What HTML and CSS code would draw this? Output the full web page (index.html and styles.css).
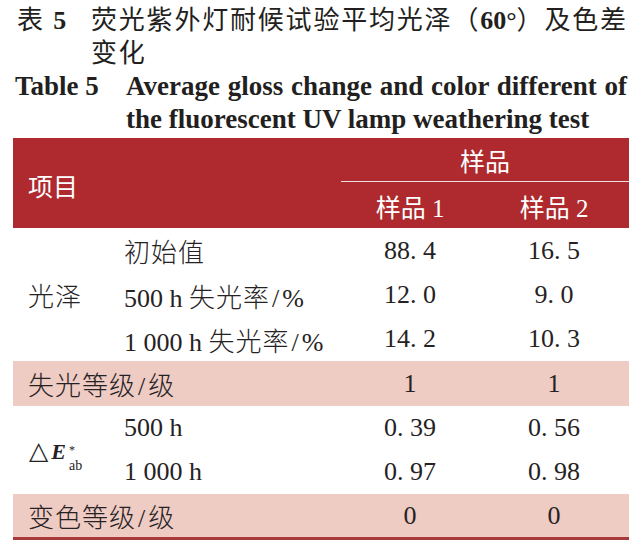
FILE: index.html
```html
<!DOCTYPE html>
<html lang="zh">
<head>
<meta charset="utf-8">
<title>表5</title>
<link rel="stylesheet" href="styles.css">
</head>
<body>
<div class="page">
  <div class="cap cap-cn">
    <div class="lab"><span class="cjk">表</span> <b class="num">5</b></div>
    <div class="txt">荧光紫外灯耐候试验平均光泽（<b class="num">60°</b>）及色差<br>变化</div>
  </div>
  <div class="cap cap-en">
    <div class="lab">Table 5</div>
    <div class="txt"><span class="l1">Average gloss change and color different of</span><br>the fluorescent UV lamp weathering test</div>
  </div>
  <div class="tbl-wrap">
    <table class="tbl">
      <colgroup>
        <col class="c-a"><col class="c-b"><col class="c-c"><col class="c-d">
      </colgroup>
      <thead>
        <tr class="h1">
          <th rowspan="2" colspan="2" class="item">项目</th>
          <th colspan="2" class="grp">样品</th>
        </tr>
        <tr class="h2">
          <th class="ctr">样品 1</th>
          <th class="ctr">样品 2</th>
        </tr>
      </thead>
      <tbody>
        <tr class="r r-first">
          <td rowspan="3" class="first"><span class="cn">光泽</span></td>
          <td><span class="cn">初始值</span></td>
          <td class="ctr">88. 4</td>
          <td class="ctr">16. 5</td>
        </tr>
        <tr class="r">
          <td>500 h <span class="cn">失光率</span><span class="sl">/</span>%</td>
          <td class="ctr">12. 0</td>
          <td class="ctr">9. 0</td>
        </tr>
        <tr class="r">
          <td>1 000 h <span class="cn">失光率</span><span class="sl">/</span>%</td>
          <td class="ctr">14. 2</td>
          <td class="ctr">10. 3</td>
        </tr>
        <tr class="pink p1">
          <td colspan="2" class="first"><span class="cn">失光等级</span><span class="sl">/</span>级</td>
          <td class="ctr">1</td>
          <td class="ctr">1</td>
        </tr>
        <tr class="r">
          <td rowspan="2" class="first de"><span class="tri">△</span><span class="ee">E</span><span class="ss"><span class="sup">*</span><span class="sub">ab</span></span></td>
          <td>500 h</td>
          <td class="ctr">0. 39</td>
          <td class="ctr">0. 56</td>
        </tr>
        <tr class="r">
          <td>1 000 h</td>
          <td class="ctr">0. 97</td>
          <td class="ctr">0. 98</td>
        </tr>
        <tr class="pink p2">
          <td colspan="2" class="first"><span class="cn">变色等级</span><span class="sl">/</span>级</td>
          <td class="ctr">0</td>
          <td class="ctr">0</td>
        </tr>
      </tbody>
    </table>
  </div>
</div>
</body>
</html>
```
FILE: styles.css
```css
html, body {
  margin: 0;
  padding: 0;
  background: #ffffff;
}

.page {
  width: 616px;
  padding: 4px 11px 0 13px;
  color: #231f20;
}

.cap {
  display: grid;
}

.cap-cn {
  grid-template-columns: 74px auto;
  padding-left: 4px;
  font-family: "Liberation Serif", "Noto Sans CJK SC", serif;
  font-size: 26px;
  line-height: 33px;
  letter-spacing: 1.8px;
}

.cap-cn .num {
  font-weight: 700;
  letter-spacing: 0;
}

.cap-en {
  grid-template-columns: 111px auto;
  padding-left: 2px;
  font-family: "Liberation Serif", serif;
  font-weight: 700;
  font-size: 27px;
  line-height: 33px;
  white-space: nowrap;
}

.cap-en .l1 {
  word-spacing: 1px;
}

.tbl-wrap {
  margin-top: 2px;
  border-bottom: 3px solid #a83a3c;
  width: 616px;
}

.tbl {
  width: 616px;
  table-layout: fixed;
  border-collapse: separate;
  border-spacing: 0;
  font-family: "Liberation Serif", "Noto Sans CJK SC", serif;
  font-weight: 300;
  font-size: 26px;
  color: #262223;
}

.c-a { width: 111px; }
.c-b { width: 217px; }
.c-c { width: 138px; }
.c-d { width: 150px; }

.tbl th,
.tbl td {
  padding: 0;
  text-align: left;
  vertical-align: middle;
  white-space: nowrap;
}

.tbl thead th {
  background: #ae2a2e;
  color: #ffffff;
  font-weight: 400;
  font-family: "Liberation Serif", "Noto Sans CJK SC", sans-serif;
  font-size: 25px;
}

.tbl .h1 { height: 44px; }
.tbl .h2 { height: 46px; }

.tbl th.item {
  padding-left: 15px;
  padding-top: 3px;
}

.tbl th.grp {
  text-align: center;
  border-bottom: 1px solid rgba(255, 255, 255, 0.85);
}

.tbl .ctr {
  text-align: center;
}

.tbl th.ctr {
  padding-top: 2px;
}

.tbl .cn {
  letter-spacing: 1px;
}

.tbl .sl {
  margin: 0 3px 0 2px;
}

.tbl .r { height: 44px; }
.tbl .r-first { height: 45px; }
.tbl .p1 { height: 45px; }
.tbl .p2 { height: 43px; }

.tbl .pink td {
  background: #eecbc3;
}

.tbl td.first {
  padding-left: 15px;
}

.tbl td.de {
  padding-left: 16px;
  padding-top: 8px;
}

.tri {
  font-family: "DejaVu Sans", sans-serif;
  font-size: 25px;
  font-weight: 400;
}

.ee {
  font-family: "Liberation Serif", serif;
  font-style: italic;
  font-weight: 700;
  font-size: 22px;
  margin-left: 3px;
}

.ss {
  display: inline-block;
  vertical-align: -11px;
  margin-left: 3px;
  font-family: "Liberation Serif", serif;
  font-weight: 400;
  line-height: 0;
}

.sup {
  display: block;
  font-size: 12px;
  line-height: 18px;
}

.sub {
  display: block;
  font-size: 14px;
  line-height: 14px;
}
```
